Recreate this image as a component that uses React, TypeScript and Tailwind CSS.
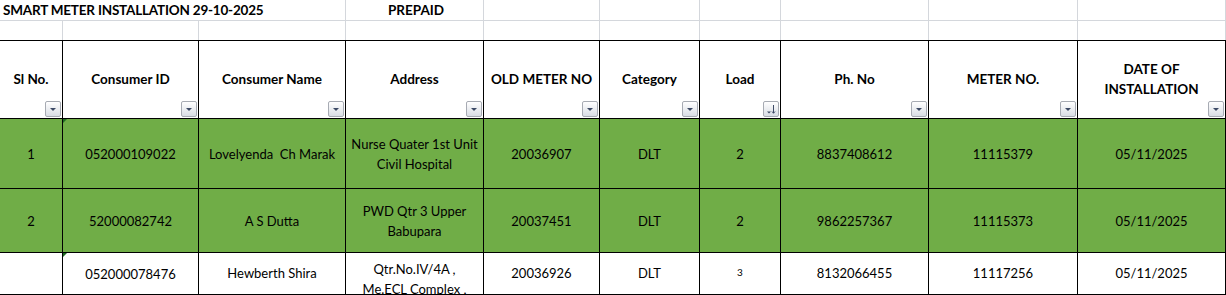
import React from 'react';

const cols = 'grid grid-cols-[63px_136px_147px_138px_116px_100px_81px_148px_149px_148px]';

const FilterBtn = ({ sort }: { sort?: boolean }) => (
  <div className="absolute right-[1px] bottom-[1px] w-[16px] h-[16px] rounded-[2px] border border-[#a7abb3] bg-gradient-to-b from-[#ffffff] to-[#d9dde4] flex items-center justify-center">
    {sort ? (
      <svg width="12" height="12" viewBox="0 0 12 12">
        <path d="M2 8.5h4l-2 2z" fill="#3d4a66" />
        <path d="M8.5 2v8M7 8.5l1.5 1.8 1.5-1.8" stroke="#3d4a66" strokeWidth="1" fill="none" />
      </svg>
    ) : (
      <svg width="8" height="5" viewBox="0 0 8 5">
        <path d="M1 1h6l-3 3z" fill="#3d4a66" />
      </svg>
    )}
  </div>
);

const headers = [
  ['Sl No.'],
  ['Consumer ID'],
  ['Consumer Name'],
  ['Address'],
  ['OLD METER NO'],
  ['Category'],
  ['Load'],
  ['Ph. No'],
  ['METER NO.'],
  ['DATE OF', 'INSTALLATION'],
];

const rows = [
  {
    h: 'h-[70px]',
    cells: ['1', '052000109022', 'Lovelyenda  Ch Marak', ['Nurse Quater 1st Unit', 'Civil Hospital'], '20036907', 'DLT', '2', '8837408612', '11115379', '05/11/2025'],
  },
  {
    h: 'h-[64px]',
    cells: ['2', '52000082742', 'A S Dutta', ['PWD Qtr 3 Upper', 'Babupara'], '20037451', 'DLT', '2', '9862257367', '11115373', '05/11/2025'],
  },
];

export default function App() {
  return (
    <div className="w-[1226px] h-[295px] bg-white overflow-hidden text-black font-['Lato',sans-serif] text-[13px]">
      {/* title row */}
      <div className={`${cols} h-[21px]`}>
        <div className="col-span-3 border-b border-r border-[#d4d7dc] pl-[3px] font-bold text-[13.5px] tracking-[-0.2px] leading-[20px] whitespace-nowrap">
          SMART METER INSTALLATION 29-10-2025
        </div>
        <div className="border-b border-r border-[#d4d7dc] pl-[42px] font-bold text-[13.5px] leading-[20px]">PREPAID</div>
        {[0, 1, 2, 3, 4, 5].map((i) => (
          <div key={i} className="border-b border-r border-[#d4d7dc]" />
        ))}
      </div>
      {/* empty row */}
      <div className={`${cols} h-[19px]`}>
        {headers.map((_, i) => (
          <div key={i} className="border-r border-[#d4d7dc]" />
        ))}
      </div>
      {/* header */}
      <div className={`${cols} h-[79px] border-t border-black`}>
        {headers.map((lines, i) => (
          <div key={i} className="relative border-r border-b border-black flex flex-col items-center justify-center font-bold text-[13.5px] leading-[20px] pb-[1px]">
            {lines.map((l) => (
              <span key={l}>{l}</span>
            ))}
            <FilterBtn sort={i === 6} />
          </div>
        ))}
      </div>
      {rows.map((r, ri) => (
        <div key={ri} className={`${cols} ${r.h} bg-[#70ad47]`}>
          {r.cells.map((c, ci) => (
            <div key={ci} className="relative border-r border-b border-black flex flex-col items-center justify-center leading-[20px] whitespace-pre">
              {Array.isArray(c) ? c.map((l) => <span key={l}>{l}</span>) : <span>{c}</span>}
              {ci === 1 && ri === 0 && (
                <div className="absolute left-0 top-0 w-0 h-0 border-t-[4px] border-r-[4px] border-t-[#1e6b23] border-r-transparent" />
              )}
            </div>
          ))}
        </div>
      ))}
      {/* last row, cut off at the bottom */}
      <div className={`${cols} h-[42px]`}>
        <div className="border-r border-b border-black" />
        <div className="relative border-r border-b border-black flex items-center justify-center leading-[20px]">
          052000078476
          <div className="absolute left-0 top-0 w-0 h-0 border-t-[4px] border-r-[4px] border-t-[#1e6b23] border-r-transparent" />
        </div>
        <div className="border-r border-b border-black flex items-center justify-center">Hewberth Shira</div>
        <div className="border-r border-b border-black overflow-hidden flex flex-col items-center pt-[6px] leading-[20px]">
          <span>Qtr.No.IV/4A ,</span>
          <span>Me.ECL Complex ,</span>
        </div>
        <div className="border-r border-b border-black flex items-center justify-center">20036926</div>
        <div className="border-r border-b border-black flex items-center justify-center">DLT</div>
        <div className="border-r border-b border-black flex items-center justify-center text-[10px] pb-[2px]">3</div>
        <div className="border-r border-b border-black flex items-center justify-center">8132066455</div>
        <div className="border-r border-b border-black flex items-center justify-center">11117256</div>
        <div className="border-r border-b border-black flex items-center justify-center">05/11/2025</div>
      </div>
    </div>
  );
}
